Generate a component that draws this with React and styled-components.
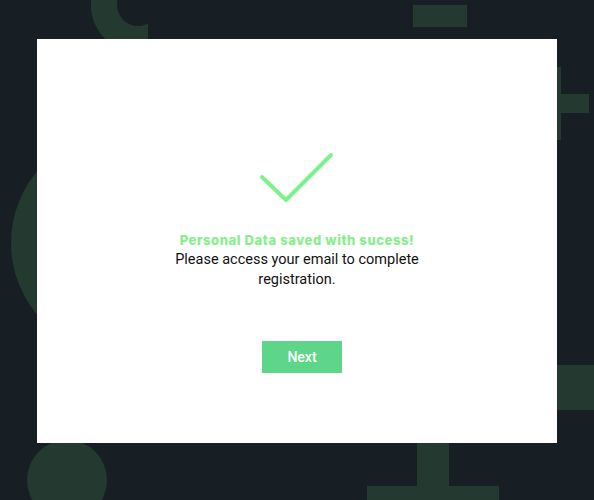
import React from "react";
import styled, { createGlobalStyle } from "styled-components";

const GlobalStyle = createGlobalStyle`
  html, body {
    margin: 0;
    padding: 0;
    background: #171f25;
  }
  body {
    font-family: Roboto, "Noto Sans", sans-serif;
  }
`;

const Page = styled.div`
  position: relative;
  width: 594px;
  height: 500px;
  overflow: hidden;
  background: #171f25;
  padding: 39px 37px;
  box-sizing: border-box;
`;

const Backdrop = styled.svg`
  position: absolute;
  inset: 0;
  z-index: 0;
`;

const Card = styled.div`
  position: relative;
  z-index: 1;
  width: 520px;
  height: 404px;
  background: #ffffff;
  display: flex;
  flex-direction: column;
  align-items: center;
  padding-top: 111px;
  box-sizing: border-box;
`;

const Check = styled.svg`
  display: block;
`;

const Title = styled.p`
  margin: 26px 0 0;
  font-family: Inter, Roboto, sans-serif;
  font-size: 13px;
  font-weight: 800;
  letter-spacing: 0.6px;
  line-height: 20px;
  color: #86ef8c;
  text-align: center;
`;

const Message = styled.p`
  margin: 0;
  width: 260px;
  font-size: 14.5px;
  line-height: 20px;
  color: #111;
  text-align: center;
`;

const NextButton = styled.button`
  margin: 51px 0 0 10px;
  width: 80px;
  height: 32px;
  border: none;
  background: #5dd68a;
  color: #fff;
  font-family: inherit;
  font-size: 14px;
  font-weight: 500;
  cursor: pointer;
`;

const SHAPE = "#243a30";

const Decorations = () => (
  <Backdrop width="594" height="500" viewBox="0 0 594 500">
    <path
      fill={SHAPE}
      d="M148,-40.9 A47,47 0 1 0 148,50.9 L148,23.5 A21,21 0 1 1 148,-13.5 Z"
    />
    <rect x="413" y="5" width="54" height="22" fill={SHAPE} />
    <rect x="542" y="67" width="19" height="73" fill={SHAPE} />
    <rect x="514" y="94" width="75" height="19" fill={SHAPE} />
    <rect x="500" y="365" width="120" height="45" fill={SHAPE} />
    <rect x="417" y="420" width="32" height="100" fill={SHAPE} />
    <rect x="367" y="486" width="132" height="32" fill={SHAPE} />
    <circle cx="122" cy="243" r="111" fill={SHAPE} />
    <circle cx="67" cy="480" r="40" fill={SHAPE} />
  </Backdrop>
);

export default function App() {
  return (
    <>
      <GlobalStyle />
      <Page>
        <Decorations />
        <Card>
          <Check width="80" height="54" viewBox="0 0 80 54">
            <polyline
              points="5,27 29,50 74,5"
              fill="none"
              stroke="#80f08a"
              strokeWidth="4"
              strokeLinecap="round"
              strokeLinejoin="round"
            />
          </Check>
          <Title>Personal Data saved with sucess!</Title>
          <Message>Please access your email to complete registration.</Message>
          <NextButton>Next</NextButton>
        </Card>
      </Page>
    </>
  );
}
